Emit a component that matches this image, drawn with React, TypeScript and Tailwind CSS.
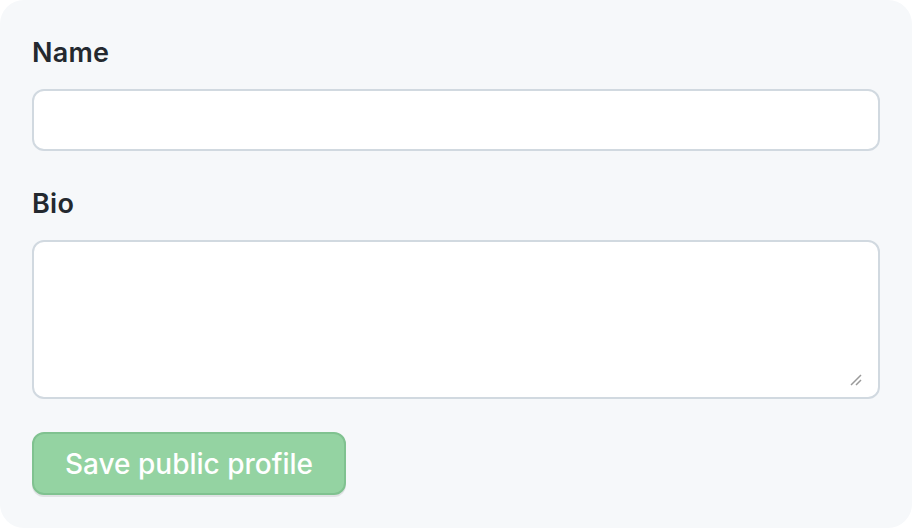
export default function App() {
  return (
    <div className="w-[912px] h-[528px] bg-white">
      <form
        className="flex h-full w-full flex-col rounded-[24px] bg-[#f6f8fa] px-8 pt-8 text-[#24292f]"
        style={{ fontFamily: "Inter, 'Noto Sans', sans-serif" }}
        onSubmit={(event) => event.preventDefault()}
      >
        <label
          className="mb-[15px] block text-[27px] font-semibold leading-[42px] tracking-[0.01em]"
          htmlFor="name"
        >
          Name
        </label>
        <input
          id="name"
          className="h-[62px] w-full rounded-[12px] border-2 border-[#d1d9e0] bg-white px-4 text-[28px] outline-none"
          type="text"
        />

        <label
          className="mt-8 mb-[15px] block text-[27px] font-semibold leading-[42px] tracking-[0.01em]"
          htmlFor="bio"
        >
          Bio
        </label>
        <div className="relative">
          <textarea
            id="bio"
            className="block h-[159px] w-full resize-none rounded-[12px] border-2 border-[#d1d9e0] bg-white px-4 py-2 text-[28px] outline-none"
          />
          {/* resize grip */}
          <svg
            className="pointer-events-none absolute right-[18px] bottom-[13px]"
            width="12"
            height="12"
            viewBox="0 0 12 12"
          >
            <path d="M1 11 L11 1 M6 11 L11 6" stroke="#9a9a9a" strokeWidth="1.5" />
          </svg>
        </div>

        <div className="mt-[33px]">
          <button
            className="h-[63px] rounded-[12px] border-2 border-[#80c290] bg-[#94d3a2] px-[31px] text-[28px] font-medium text-white shadow-[0_2px_0_rgba(31,35,40,0.1)]"
            type="submit"
          >
            Save public profile
          </button>
        </div>
      </form>
    </div>
  );
}
